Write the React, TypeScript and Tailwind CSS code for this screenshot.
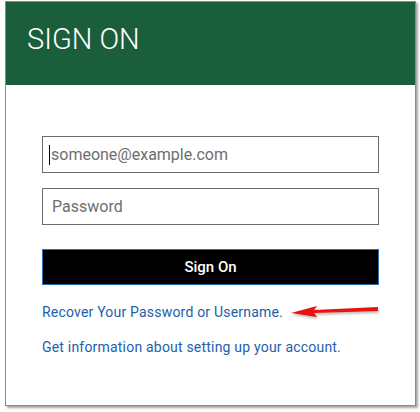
export default function App() {
  return (
    <div className="w-[420px] h-[412px] bg-white pt-[1px] pl-[5px] font-['Roboto',sans-serif]">
      <div className="w-[411px] h-[405px] bg-white border border-[#8a8a8a] shadow-[2px_2px_2px_rgba(0,0,0,0.35)] flex flex-col">
        {/* Header */}
        <div className="h-[83px] bg-[#1b5e3b] pl-[21px] pt-[23px]">
          <h1 className="text-white text-[29px] font-light leading-none">SIGN ON</h1>
        </div>

        {/* Form */}
        <div className="flex flex-col px-[36px] pt-[51px]">
          <div className="h-[37px] border border-[#6b6b6b] flex items-center pl-[6px]">
            <span className="w-px h-[20px] bg-black mr-[1px]" />
            <span className="text-[16px] text-[#6e6e6e]">someone@example.com</span>
          </div>
          <div className="h-[37px] border border-[#6b6b6b] flex items-center pl-[9px] mt-[15px]">
            <span className="text-[16px] text-[#6e6e6e]">Password</span>
          </div>
          <button className="h-[36px] mt-[24px] bg-black border border-[#2d6bb3] text-white text-[15px] font-medium">
            Sign On
          </button>
          <div className="flex items-center mt-[18px] h-[18px]">
            <a className="text-[14px] text-[#2160ab] tracking-[0.2px] whitespace-nowrap shrink-0">
              Recover Your Password or Username.
            </a>
            <svg width="100" height="18" viewBox="0 0 100 18" className="ml-[2px] shrink-0">
              <defs>
                <filter id="sh" x="-20%" y="-50%" width="140%" height="200%">
                  <feGaussianBlur stdDeviation="1.3" />
                </filter>
              </defs>
              <g filter="url(#sh)" opacity="0.55" transform="translate(1,2)">
                <path d="M6 10 L32 3 L29 7 L93 4 L93 8 L29 10 L32 14 Z" fill="#888" />
              </g>
              <path d="M6 10 L32 3 L29 7 L93 4 L93 8 L29 10 L32 14 Z" fill="#e8130f" />
            </svg>
          </div>
          <a className="text-[14px] text-[#2160ab] tracking-[0.2px] mt-[16px] whitespace-nowrap">
            Get information about setting up your account.
          </a>
        </div>
      </div>
    </div>
  );
}
